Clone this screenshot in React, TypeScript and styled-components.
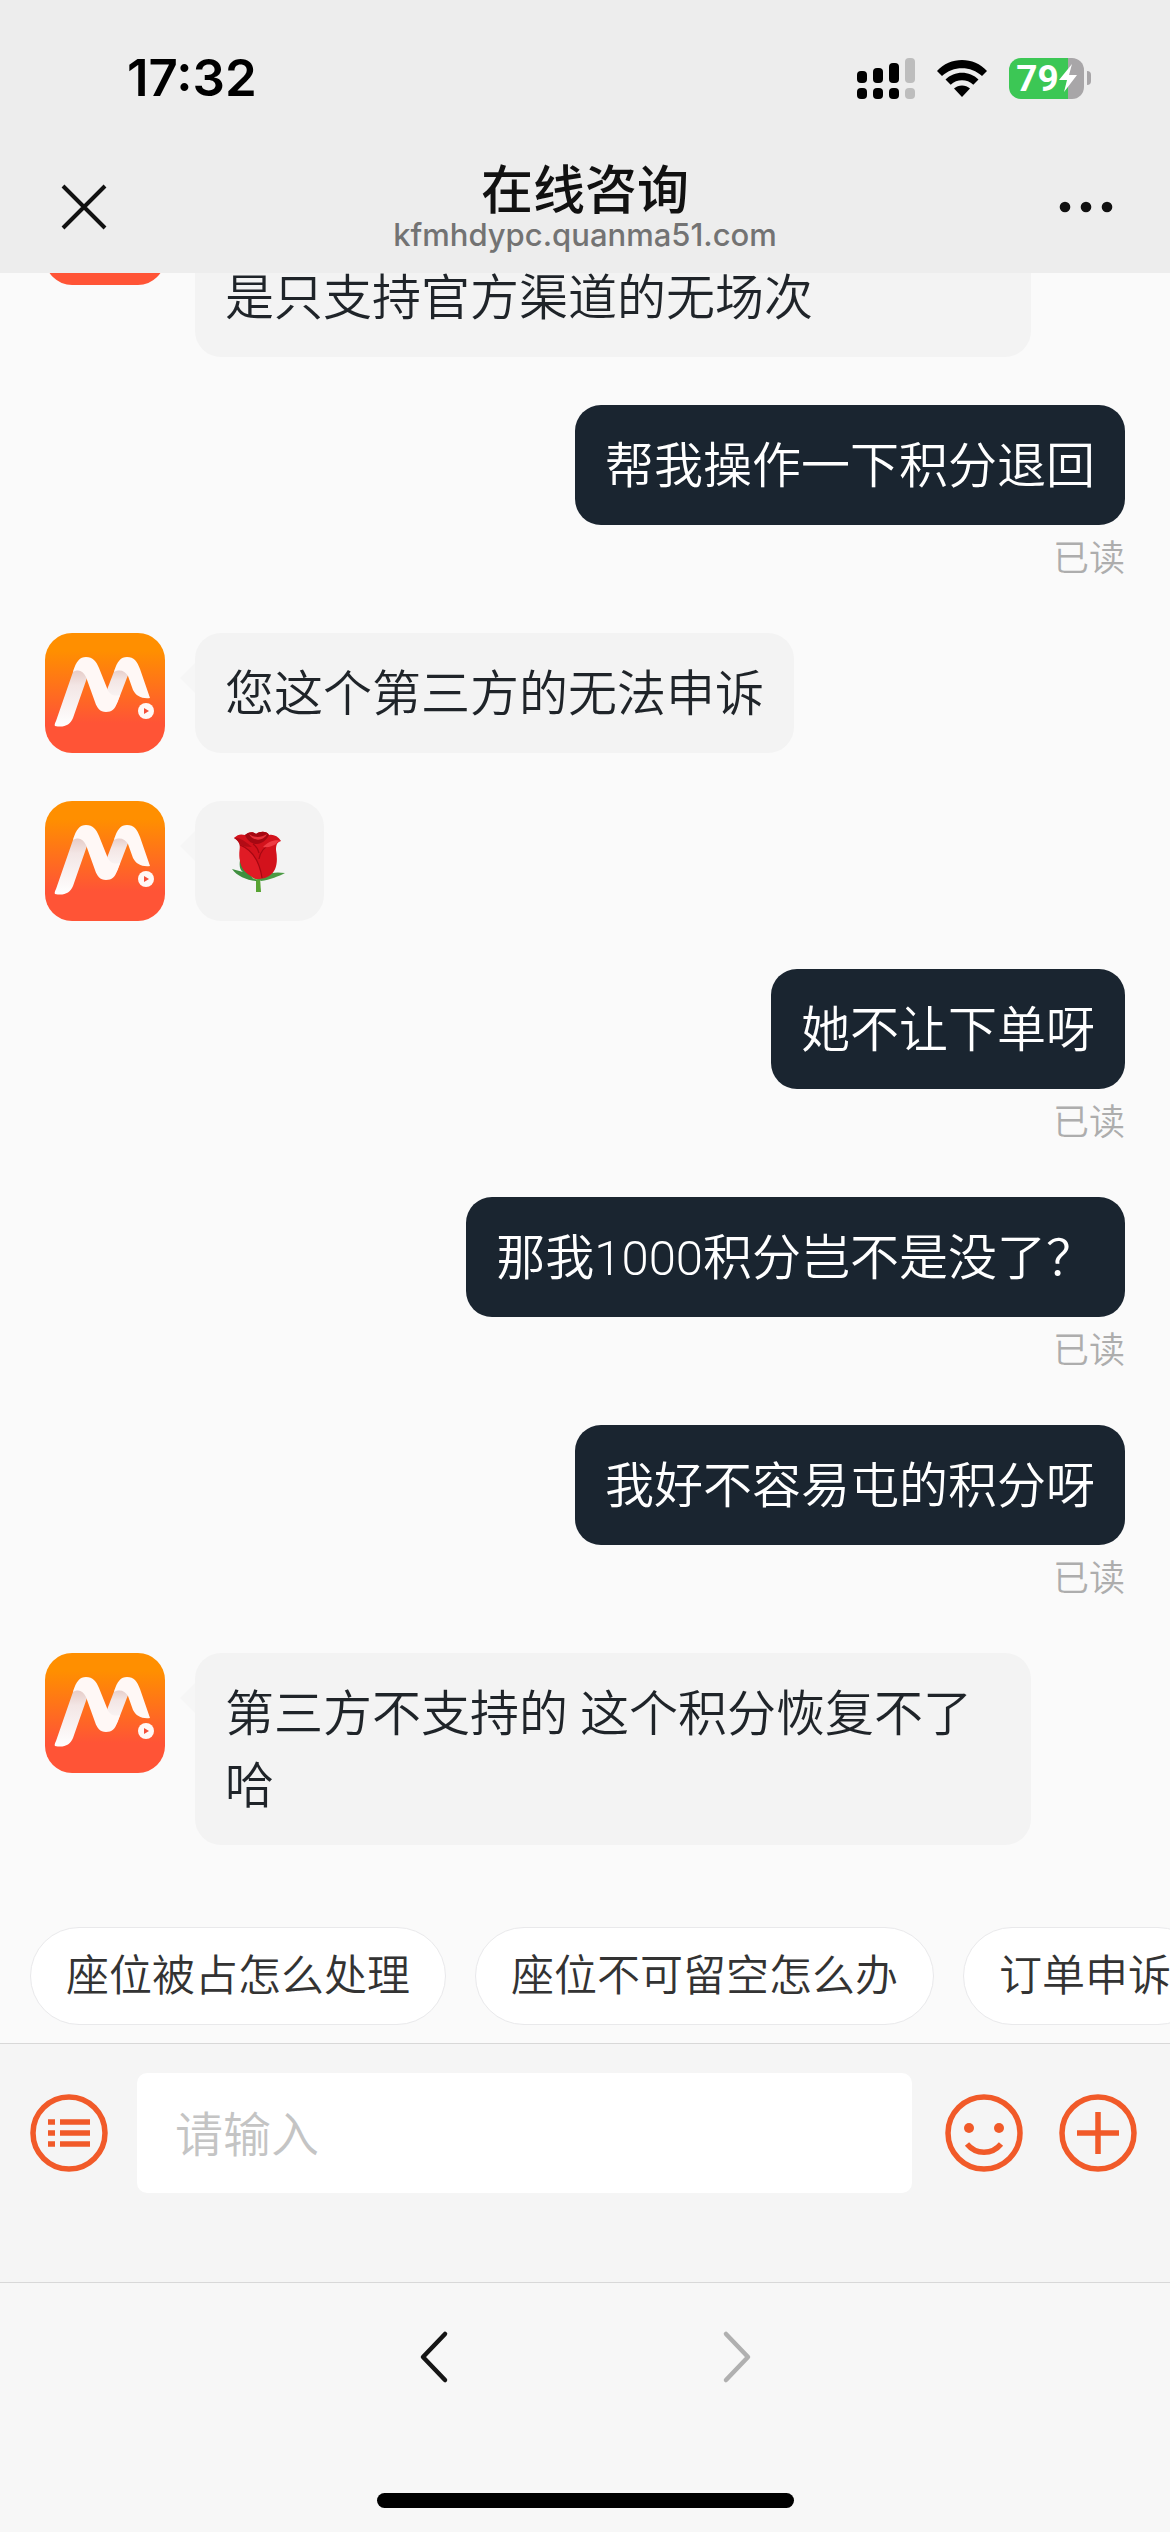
import React from "react";
import styled, { createGlobalStyle, css } from "styled-components";

const cjk = `"Noto Sans CJK SC", "Noto Sans", sans-serif`;
const chat = `Roboto, "Noto Sans CJK SC", sans-serif`;
const latin = `Inter, "Noto Sans CJK SC", sans-serif`;
const accent = "#f15a29";

const GlobalStyle = createGlobalStyle`
  *, *::before, *::after { box-sizing: border-box; }
  html, body { margin: 0; padding: 0; background: #f7f7f7; }
  body { font-family: ${cjk}; }
  button { border: 0; padding: 0; background: none; font: inherit; color: inherit; cursor: pointer; }
  svg { display: block; flex: none; }
`;

const Screen = styled.div`
  display: flex;
  flex-direction: column;
  height: 100vh;
  overflow: hidden;
  background: #fafafa;
`;

/* ---------- header ---------- */

const Header = styled.header`
  flex: none;
  background: #ededed;
  color: #111;
`;

const StatusBar = styled.div`
  display: flex;
  align-items: center;
  justify-content: space-between;
  height: 141px;
  padding: 15px 79px 0 127px;
`;

const Clock = styled.time`
  font: 600 51px/60px ${latin};
  color: #000;
`;

const StatusIcons = styled.div`
  display: flex;
  align-items: center;
  gap: 22px;
`;

const Battery = styled.div`
  display: flex;
  align-items: center;
  gap: 3px;
`;

const BatteryBody = styled.div`
  display: flex;
  align-items: center;
  justify-content: center;
  width: 75px;
  height: 41px;
  border-radius: 12px;
  background: linear-gradient(90deg, #3cc755 79%, #a8a6a8 79%);
  color: #fff;
  font: 700 37px/41px Roboto, sans-serif;
`;

const BatteryTip = styled.span`
  width: 4px;
  height: 14px;
  border-radius: 0 4px 4px 0;
  background: #a8a6a8;
`;

const NavBar = styled.div`
  display: grid;
  grid-template-columns: 1fr auto 1fr;
  align-items: center;
  height: 132px;
  padding: 0 54px;
`;

const IconButton = styled.button<{ $end?: boolean }>`
  display: flex;
  justify-self: ${(p) => (p.$end ? "end" : "start")};
`;

const Heading = styled.div`
  display: flex;
  flex-direction: column;
  align-items: center;
  padding-bottom: 4px;
`;

const Title = styled.h1`
  margin: 0;
  font: 500 52px/60px ${cjk};
`;

const Domain = styled.span`
  font: 500 31px/36px ${latin};
  color: #737373;
`;

/* ---------- conversation ---------- */

const Conversation = styled.main`
  display: flex;
  flex: 1;
  flex-direction: column;
  justify-content: flex-end;
  min-height: 0;
  overflow: hidden;
`;

const Messages = styled.ol`
  display: flex;
  flex-direction: column;
  gap: 48px;
  margin: 0;
  padding: 0 45px 48px;
  list-style: none;
`;

const Message = styled.li<{ $mine?: boolean }>`
  display: flex;
  flex-direction: ${(p) => (p.$mine ? "column" : "row")};
  align-items: ${(p) => (p.$mine ? "flex-end" : "flex-start")};
  gap: ${(p) => (p.$mine ? "3px" : "30px")};
`;

const Bubble = styled.div<{ $mine?: boolean; $tall?: boolean }>`
  max-width: 836px;
  padding: 26px 30px 22px;
  border-radius: 26px;
  font: 350 49px/72px ${chat};
  ${(p) =>
    p.$mine
      ? css`
          background: #1a2530;
          color: #fff;
        `
      : css`
          position: relative;
          background: #f3f3f3;
          color: #1f2429;
          &::before {
            content: "";
            position: absolute;
            top: 30px;
            left: -15px;
            border: solid transparent;
            border-width: 15px 15px 15px 0;
            border-right-color: #f6f6f6;
          }
        `}
  ${(p) =>
    p.$tall &&
    css`
      display: flex;
      align-items: flex-end;
      width: 836px;
      min-height: 192px;
    `}
`;

const ReadMark = styled.span`
  padding-bottom: 3px;
  font: 350 36px/54px ${cjk};
  color: #adadad;
`;

/* ---------- quick questions ---------- */

const QuickQuestions = styled.div`
  display: flex;
  flex: none;
  gap: 29px;
  padding: 34px 30px 18px;
  overflow: hidden;
`;

const Chip = styled.button`
  flex: none;
  height: 98px;
  padding: 0 35px 8px;
  border: 1px solid #e9e9eb;
  border-radius: 49px;
  background: #fff;
  color: #333;
  font: 350 43px/60px ${cjk};
  white-space: nowrap;
`;

/* ---------- composer ---------- */

const Composer = styled.form`
  display: flex;
  flex: none;
  align-items: center;
  gap: 29px;
  padding: 29px 33px 89px 30px;
  border-top: 1px solid #d8d8d8;
  background: #f5f5f5;
`;

const TextBox = styled.input`
  flex: 1;
  min-width: 0;
  height: 120px;
  padding: 0 38px 4px;
  border: 0;
  border-radius: 10px;
  outline: 0;
  background: #fff;
  color: #333;
  font: 350 48px/72px ${cjk};
  &::placeholder {
    color: #c4c4c4;
    opacity: 1;
  }
`;

const Actions = styled.div`
  display: flex;
  gap: 36px;
  padding-left: 4px;
`;

/* ---------- browser bar ---------- */

const BrowserBar = styled.footer`
  display: flex;
  flex: none;
  flex-direction: column;
  align-items: center;
  gap: 63px;
  padding-bottom: 24px;
  border-top: 1px solid #d8d8d8;
  background: #f7f7f7;
`;

const History = styled.nav`
  display: flex;
  align-items: center;
  gap: 255px;
  height: 147px;
`;

const HomeIndicator = styled.div`
  width: 417px;
  height: 15px;
  border-radius: 8px;
  background: #000;
`;

/* ---------- drawings ---------- */

const SignalIcon = () => (
  <svg width="58" height="41" viewBox="0 0 58 41" aria-hidden="true">
    {[13, 10, 5, 0].map((top, i) => (
      <g key={top} fill={i === 3 ? "#bdbdbd" : "#000"}>
        <rect x={i * 16} y={top} width="10" height={25 - top} rx="4" />
        <rect x={i * 16} y="30" width="10" height="11" rx="4" />
      </g>
    ))}
  </svg>
);

const WifiIcon = () => (
  <svg width="50" height="37" viewBox="0 0 50 37" aria-hidden="true">
    <path d="M0 11C13-3.600 37-3.600 50 11L45 16C34 5.500 16 5.500 5 16Z" />
    <path d="M8.500 19.500C17.500 10.500 32.500 10.500 41.500 19.500L36.300 24.700C30 18.800 20 18.800 13.700 24.700Z" />
    <path d="M17 28.500C21.500 24.500 28.500 24.500 33 28.500L25 37Z" />
  </svg>
);

const BoltIcon = () => (
  <svg width="18" height="28" viewBox="0 0 18 28" aria-hidden="true">
    <path d="M13 0 0 16H8L5 28 18 11H10Z" fill="#fff" />
  </svg>
);

const CloseIcon = () => (
  <svg width="60" height="48" viewBox="0 0 60 48" fill="none" stroke="#111" strokeWidth="4" aria-hidden="true">
    <path d="M9 3 51 45M51 3 9 45" />
  </svg>
);

const MoreIcon = () => (
  <svg width="60" height="48" viewBox="0 0 60 48" fill="#111" aria-hidden="true">
    <circle cx="9" cy="24" r="5.300" />
    <circle cx="30" cy="24" r="5.300" />
    <circle cx="51" cy="24" r="5.300" />
  </svg>
);

const Avatar = () => (
  <svg width="120" height="120" viewBox="0 0 120 120" role="img" aria-label="客服">
    <defs>
      <linearGradient id="tile" x1="0" y1="0" x2="0" y2="1">
        <stop offset="0.150" stopColor="#ff8f00" />
        <stop offset="0.750" stopColor="#ff5436" />
      </linearGradient>
      <linearGradient id="fold" x1="0" y1="0" x2="0" y2="1">
        <stop offset="0.050" stopColor="#e6cdc9" />
        <stop offset="0.300" stopColor="#f3e6e5" />
        <stop offset="1" stopColor="#fff" />
      </linearGradient>
    </defs>
    <rect width="120" height="120" rx="27" fill="url(#tile)" />
    <path d="M10 93Q9 92 11 88L29 36C35 33 41 36 43 42L28 85C25 92 19 95 10 93Z" fill="url(#fold)" />
    <path d="M60 62 70 36C77 32 82 36 83 42L73 68C70 75 66 77 62 78Z" fill="url(#fold)" />
    <path d="M28 39C31 28 35 24 41 24C48 24 51 28 54 35L62 55C64 61 68 64 75 62L72 70C70 76 67 79 61 79C55 79 52 75 50 69L41 44C38 38 34 36 28 39Z" fill="#fff8f6" />
    <path d="M69 39C72 28 76 24 82 24C89 24 92 28 95 36L105 65C97 66 91 63 88 57L83 43C80 38 75 36 69 39Z" fill="#fff8f6" />
    <circle cx="101" cy="78" r="8" fill="#fff8f6" />
    <path d="M99 75V81L104 78Z" fill="#f4513a" />
  </svg>
);

const RoseIcon = () => (
  <svg width="69" height="72" viewBox="0 4 69 72" role="img" aria-label="玫瑰">
    <path d="M31 55H35L36 69H31Z" fill="#57a332" />
    <path d="M15 37C14 43 15 47 18 49L7 46C12 53 21 57 31 58L34 55Z" fill="#3f8f3f" />
    <path d="M60 50C53 49 47 49 43 52L33 56L36 58C45 57 54 53 60 50Z" fill="#4b9a44" />
    <path d="M15 36 28 56 33 57C24 51 18 44 15 36Z" fill="#8cc46a" />
    <path d="M9 15C13 11 16 11 20 12C23 9 28 8 31 11C35 8 42 8 44 12C48 11 53 13 56 18C52 19 51 22 51 27C53 38 52 48 44 53C40 56 31 57 26 53C17 48 13 40 15 26C15 20 13 17 9 15Z" fill="#d3121c" />
    <path d="M20 12C23 9 28 8 31 11C35 8 42 8 44 12C42 17 36 21 32 21C26 21 22 17 20 12Z" fill="#a50812" />
    <path d="M24 11C29 15 36 15 42 11C39 18 28 19 24 11Z" fill="#e8323a" />
    <path d="M15 22C23 26 33 33 37 55C33 57 29 56 26 53C17 48 13 40 15 22Z" fill="#e01b25" />
    <path d="M15 22C25 26 34 34 37 55M49 19C40 23 35 29 34 36M28 21C31 23 33 26 34 30" fill="none" stroke="#a50812" strokeWidth="1.200" />
    <path d="M9 15C14 14 21 19 27 24C22 24 18 23 15 22C14 19 12 17 9 15Z" fill="#b30b15" />
    <path d="M56 18C50 16 43 19 38 24C44 25 47 23 51 21C52 19 54 18 56 18Z" fill="#ee3b43" />
  </svg>
);

const RoundIcon = ({ children }: { children: React.ReactNode }) => (
  <svg width="78" height="78" viewBox="0 0 78 78" fill="none" stroke={accent} strokeWidth="5.500" aria-hidden="true">
    <circle cx="39" cy="39" r="36" />
    {children}
  </svg>
);

const ListGlyph = () => (
  <path d="M18 28H25M18 39H25M18 50H25M30 28H60M30 39H60M30 50H60" />
);

const SmileGlyph = () => (
  <>
    <circle cx="24" cy="34" r="5" fill={accent} stroke="none" />
    <circle cx="54" cy="34" r="5" fill={accent} stroke="none" />
    <path d="M22 50C31 61 47 61 56 50" />
  </>
);

const PlusGlyph = () => <path d="M39 18V60M18 39H60" />;

const Chevron = ({ d, color }: { d: string; color: string }) => (
  <svg width="48" height="54" viewBox="0 0 48 54" fill="none" stroke={color} strokeWidth="4.500" strokeLinecap="round" strokeLinejoin="round" aria-hidden="true">
    <path d={d} />
  </svg>
);

/* ---------- data ---------- */

type Entry = { mine?: boolean; text?: string; rose?: boolean; tall?: boolean };

const entries: Entry[] = [
  { text: "是只支持官方渠道的无场次", tall: true },
  { mine: true, text: "帮我操作一下积分退回" },
  { text: "您这个第三方的无法申诉" },
  { rose: true },
  { mine: true, text: "她不让下单呀" },
  { mine: true, text: "那我1000积分岂不是没了？" },
  { mine: true, text: "我好不容易屯的积分呀" },
  { text: "第三方不支持的 这个积分恢复不了哈" },
];

const questions = ["座位被占怎么处理", "座位不可留空怎么办", "订单申诉"];

export default function App() {
  return (
    <Screen>
      <GlobalStyle />
      <Header>
        <StatusBar>
          <Clock>17:32</Clock>
          <StatusIcons>
            <SignalIcon />
            <WifiIcon />
            <Battery>
              <BatteryBody>
                79
                <BoltIcon />
              </BatteryBody>
              <BatteryTip />
            </Battery>
          </StatusIcons>
        </StatusBar>
        <NavBar>
          <IconButton type="button" aria-label="关闭">
            <CloseIcon />
          </IconButton>
          <Heading>
            <Title>在线咨询</Title>
            <Domain>kfmhdypc.quanma51.com</Domain>
          </Heading>
          <IconButton type="button" aria-label="更多" $end>
            <MoreIcon />
          </IconButton>
        </NavBar>
      </Header>

      <Conversation>
        <Messages>
          {entries.map((entry, i) => (
            <Message key={i} $mine={entry.mine}>
              {!entry.mine && <Avatar />}
              <Bubble $mine={entry.mine} $tall={entry.tall}>
                {entry.rose ? <RoseIcon /> : entry.text}
              </Bubble>
              {entry.mine && <ReadMark>已读</ReadMark>}
            </Message>
          ))}
        </Messages>
      </Conversation>

      <QuickQuestions>
        {questions.map((q) => (
          <Chip key={q} type="button">
            {q}
          </Chip>
        ))}
      </QuickQuestions>

      <Composer onSubmit={(e) => e.preventDefault()}>
        <IconButton type="button" aria-label="菜单">
          <RoundIcon>
            <ListGlyph />
          </RoundIcon>
        </IconButton>
        <TextBox type="text" aria-label="消息" placeholder="请输入" />
        <Actions>
          <IconButton type="button" aria-label="表情">
            <RoundIcon>
              <SmileGlyph />
            </RoundIcon>
          </IconButton>
          <IconButton type="button" aria-label="添加">
            <RoundIcon>
              <PlusGlyph />
            </RoundIcon>
          </IconButton>
        </Actions>
      </Composer>

      <BrowserBar>
        <History>
          <IconButton type="button" aria-label="后退">
            <Chevron d="M35 4 13 27 35 50" color="#161616" />
          </IconButton>
          <IconButton type="button" aria-label="前进">
            <Chevron d="M13 4 35 27 13 50" color="#b0b0b0" />
          </IconButton>
        </History>
        <HomeIndicator />
      </BrowserBar>
    </Screen>
  );
}
